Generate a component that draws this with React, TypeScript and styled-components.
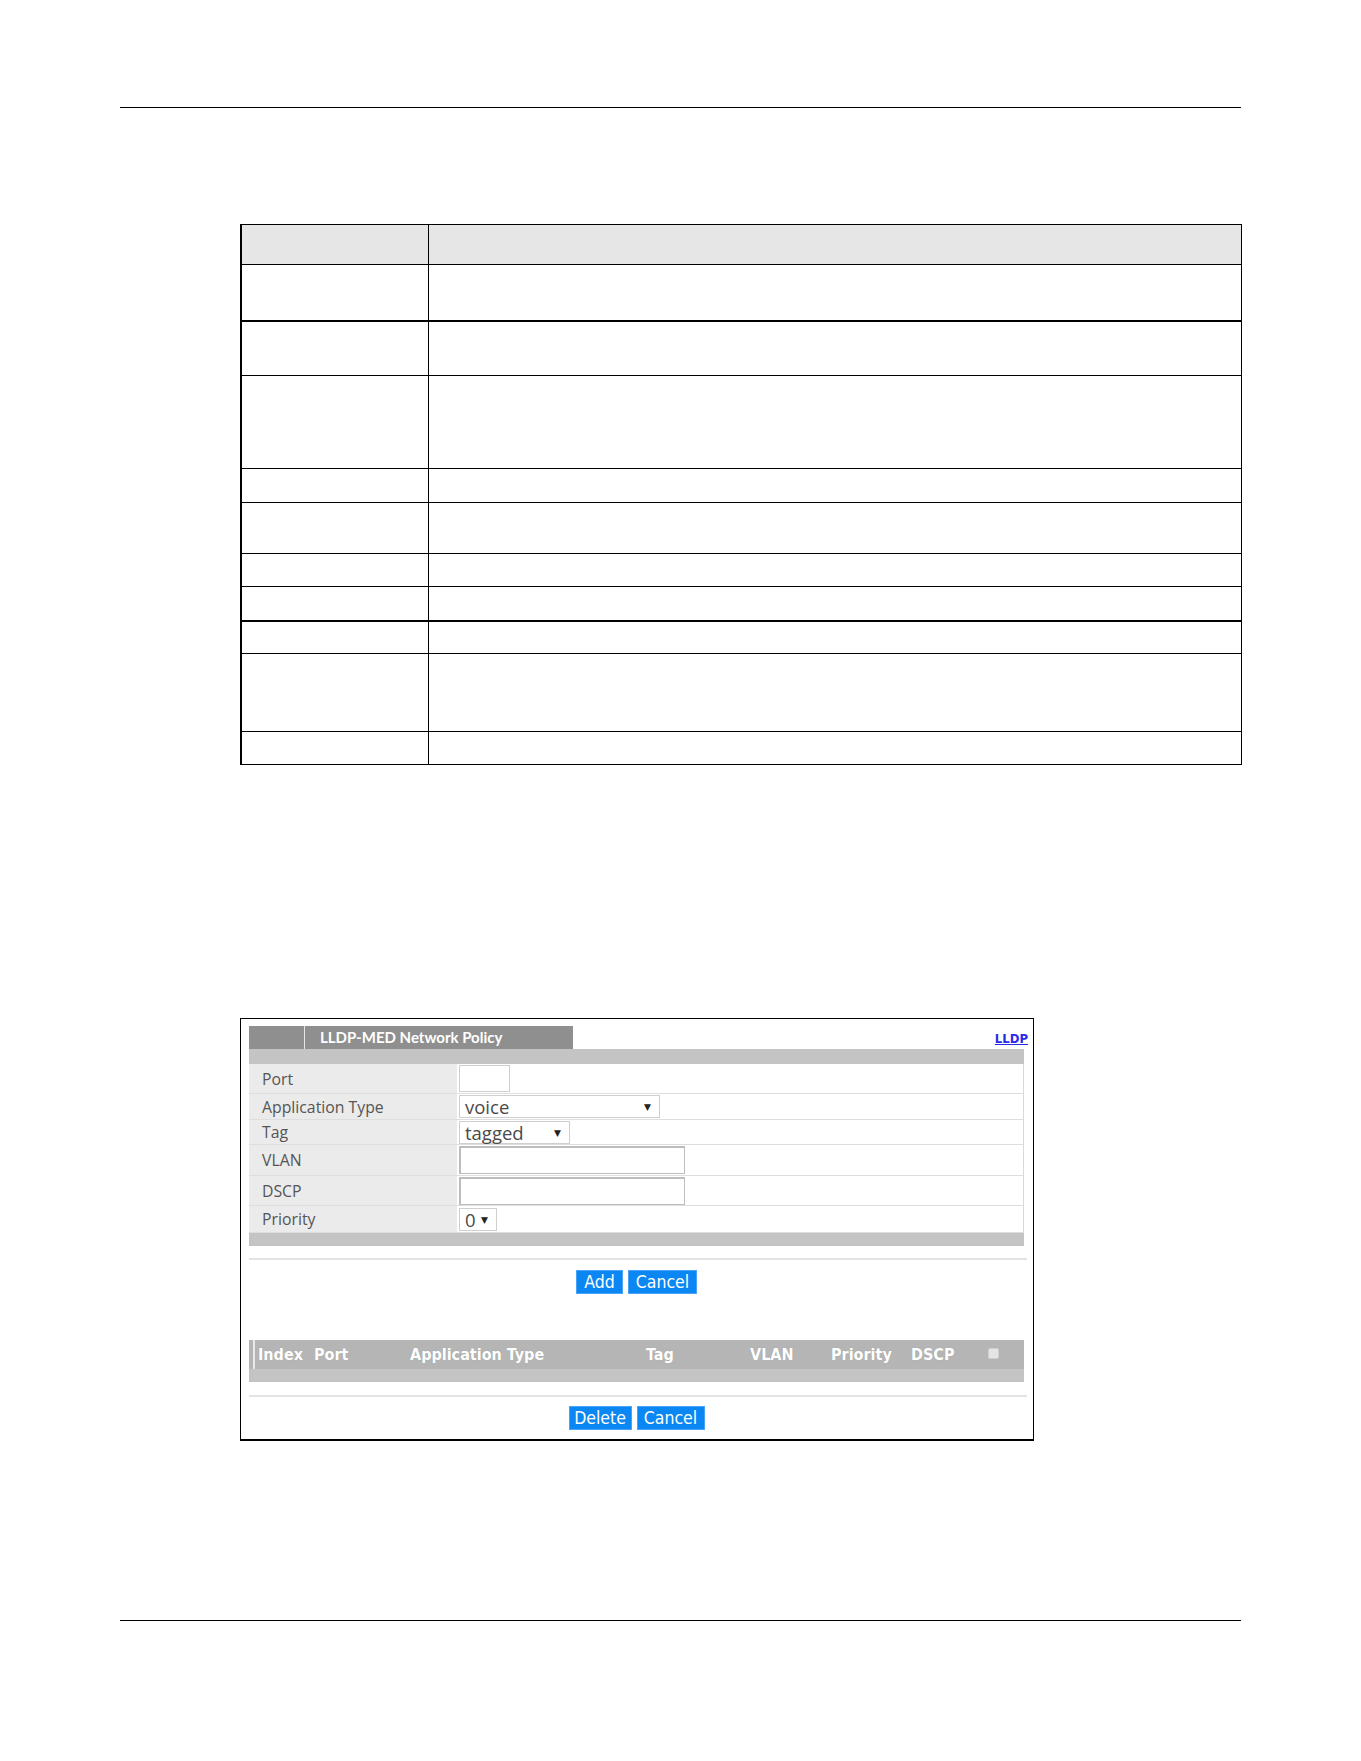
import React from "react";
import styled, { createGlobalStyle } from "styled-components";

const GlobalStyle = createGlobalStyle`
  html, body {
    margin: 0;
    padding: 0;
    background: #ffffff;
  }
  body {
    width: 1361px;
    height: 1761px;
    overflow: hidden;
    font-family: "Liberation Sans", Arial, sans-serif;
  }
`;

const UI_FONT = `"Open Sans", "Lato", "DejaVu Sans", sans-serif`;
const TITLE_FONT = `"Lato", "Open Sans", sans-serif`;
const NARROW_FONT = `"DejaVu Sans Condensed", "Liberation Sans Narrow", "Liberation Sans", sans-serif`;

const Page = styled.div`
  width: 1361px;
  height: 1761px;
  box-sizing: border-box;
  padding-top: 107px;
  position: relative;
`;

const Rule = styled.div<{ $gap?: number }>`
  margin: ${(p) => p.$gap ?? 0}px 0 0 120px;
  width: 1121px;
  height: 1px;
  background: #000000;
`;

/* ---------- description table ---------- */

const DescTable = styled.div`
  margin: 116px 0 0 240px;
  width: 1002px;
  box-sizing: border-box;
  border-top: 1px solid #000;
  border-left: 2px solid #000;
  border-right: 1px solid #000;
  border-bottom: 1px solid #000;
`;

const DescRow = styled.div<{ $h: number; $head?: boolean; $thick?: boolean; $first?: boolean }>`
  display: grid;
  grid-template-columns: 187px 1fr;
  height: ${(p) => p.$h}px;
  box-sizing: border-box;
  border-top: ${(p) => (p.$first ? "0" : p.$thick ? "2px solid #000" : "1px solid #000")};
  background: ${(p) => (p.$head ? "#e6e6e6" : "#ffffff")};
`;

const DescCell = styled.div<{ $lead?: boolean }>`
  border-right: ${(p) => (p.$lead ? "1px solid #000" : "0")};
`;

const descRows = [
  { h: 39, head: true, first: true },
  { h: 56 },
  { h: 55, thick: true },
  { h: 93 },
  { h: 34 },
  { h: 51 },
  { h: 33 },
  { h: 34 },
  { h: 33, thick: true },
  { h: 78 },
  { h: 33 },
];

/* ---------- web configurator panel ---------- */

const Panel = styled.div`
  margin: 253px 0 0 240px;
  width: 794px;
  box-sizing: border-box;
  border: 1px solid #000;
  border-bottom-width: 2px;
  padding: 7px 7px 9px 8px;
  font-family: ${UI_FONT};
`;

const TabBar = styled.div`
  display: flex;
  justify-content: space-between;
  align-items: center;
  height: 23px;
`;

const Tab = styled.div`
  display: flex;
  height: 23px;
  background: #8f8f8f;
`;

const TabLead = styled.div`
  width: 55px;
  border-right: 1px solid #e6e6e6;
`;

const TabTitle = styled.div`
  width: 268px;
  padding-left: 15px;
  box-sizing: border-box;
  color: #ffffff;
  font-family: ${TITLE_FONT};
  font-weight: 700;
  font-size: 15px;
  line-height: 23px;
`;

const TopLink = styled.a`
  font-family: ${NARROW_FONT};
  font-weight: 700;
  font-size: 13px;
  color: #2a2ae8;
  text-decoration: underline;
  margin-right: -2px;
  margin-top: 1px;
`;

const Band = styled.div<{ $h: number; $tone?: string }>`
  height: ${(p) => p.$h}px;
  width: 775px;
  background: ${(p) => p.$tone ?? "#c4c4c4"};
`;

const Form = styled.div`
  width: 775px;
  box-sizing: border-box;
  border-right: 1px solid #d9d9d9;
`;

const FormRow = styled.div<{ $h: number }>`
  display: grid;
  grid-template-columns: 210px 1fr;
  height: ${(p) => p.$h}px;
  box-sizing: border-box;
  border-bottom: 1px solid #dedede;
`;

const Label = styled.div`
  background: #ebebeb;
  border-right: 2px solid #ffffff;
  padding-left: 13px;
  display: flex;
  align-items: center;
  color: #555555;
  font-size: 15.8px;
`;

const Value = styled.div`
  display: flex;
  align-items: center;
`;

const TextBox = styled.div<{ $w: number; $h: number; $deep?: boolean }>`
  width: ${(p) => p.$w}px;
  height: ${(p) => p.$h}px;
  box-sizing: border-box;
  background: #ffffff;
  border: 1px solid ${(p) => (p.$deep ? "#bdbdbd" : "#cfcfcf")};
  border-top-width: ${(p) => (p.$deep ? 2 : 1)}px;
  border-left-width: ${(p) => (p.$deep ? 2 : 1)}px;
`;

const Select = styled.div<{ $w: number }>`
  width: ${(p) => p.$w}px;
  height: 23px;
  box-sizing: border-box;
  background: #ffffff;
  border: 1px solid #cfcfcf;
  display: flex;
  align-items: center;
  justify-content: space-between;
  padding: 0 8px 0 5px;
  color: #4a4a4a;
  font-size: 18.5px;
  line-height: 21px;
`;

const Arrow = styled.span`
  font-size: 9px;
  color: #222;
`;

const Divider = styled.div<{ $gap: number }>`
  margin-top: ${(p) => p.$gap}px;
  width: 778px;
  height: 2px;
  background: #e3e3e3;
`;

const ButtonRow = styled.div<{ $gap: number }>`
  margin-top: ${(p) => p.$gap}px;
  width: 775px;
  display: flex;
  justify-content: center;
  gap: 5px;
`;

const Button = styled.button<{ $w: number }>`
  width: ${(p) => p.$w}px;
  height: 24px;
  padding: 0;
  margin: 0;
  border: 1px solid #4aa3f6;
  background: #0b87f3;
  color: #ffffff;
  font-family: ${NARROW_FONT};
  font-size: 17.5px;
  line-height: 22px;
`;

const ListHead = styled.div`
  margin-top: 46px;
  width: 775px;
  height: 29px;
  background: #b5b5b5;
  display: grid;
  grid-template-columns: 4px 5px 56px 96px 236px 104px 81px 80px 77px 1fr;
  align-items: center;
  color: #ffffff;
  font-family: ${NARROW_FONT};
  font-weight: 700;
  font-size: 16px;
  text-shadow: 0 0 1px rgba(0, 0, 0, 0.15);
`;

const HeadMark = styled.div`
  width: 2px;
  height: 29px;
  background: #e9e9e9;
`;

const CheckBox = styled.div`
  width: 11px;
  height: 11px;
  border-radius: 2px;
  background: #e4e4e4;
  border: 1px solid #cfcfcf;
  box-sizing: border-box;
  margin-top: -3px;
`;

const formRows = [
  { label: "Port", h: 30, field: <TextBox $w={51} $h={27} /> },
  {
    label: "Application Type",
    h: 26,
    field: (
      <Select $w={201}>
        voice<Arrow>▼</Arrow>
      </Select>
    ),
  },
  {
    label: "Tag",
    h: 25,
    field: (
      <Select $w={111}>
        tagged<Arrow>▼</Arrow>
      </Select>
    ),
  },
  { label: "VLAN", h: 31, field: <TextBox $w={226} $h={28} $deep /> },
  { label: "DSCP", h: 30, field: <TextBox $w={226} $h={28} $deep /> },
  {
    label: "Priority",
    h: 27,
    field: (
      <Select $w={38}>
        0<Arrow>▼</Arrow>
      </Select>
    ),
  },
];

const listColumns = ["Index", "Port", "Application Type", "Tag", "VLAN", "Priority", "DSCP"];

export default function App() {
  return (
    <>
      <GlobalStyle />
      <Page>
        <Rule />

        <DescTable>
          {descRows.map((r, i) => (
            <DescRow key={i} $h={r.h} $head={r.head} $thick={r.thick} $first={r.first}>
              <DescCell $lead />
              <DescCell />
            </DescRow>
          ))}
        </DescTable>

        <Panel>
          <TabBar>
            <Tab>
              <TabLead />
              <TabTitle>LLDP-MED Network Policy</TabTitle>
            </Tab>
            <TopLink href="#">LLDP</TopLink>
          </TabBar>
          <Band $h={15} />
          <Form>
            {formRows.map((r) => (
              <FormRow key={r.label} $h={r.h}>
                <Label>{r.label}</Label>
                <Value>{r.field}</Value>
              </FormRow>
            ))}
          </Form>
          <Band $h={13} />

          <Divider $gap={12} />
          <ButtonRow $gap={10}>
            <Button $w={47}>Add</Button>
            <Button $w={69}>Cancel</Button>
          </ButtonRow>

          <ListHead>
            <span />
            <HeadMark />
            {listColumns.map((c) => (
              <span key={c}>{c}</span>
            ))}
            <CheckBox />
          </ListHead>
          <Band $h={13} />

          <Divider $gap={13} />
          <ButtonRow $gap={9}>
            <Button $w={63}>Delete</Button>
            <Button $w={68}>Cancel</Button>
          </ButtonRow>
        </Panel>

        <Rule $gap={179} />
      </Page>
    </>
  );
}
